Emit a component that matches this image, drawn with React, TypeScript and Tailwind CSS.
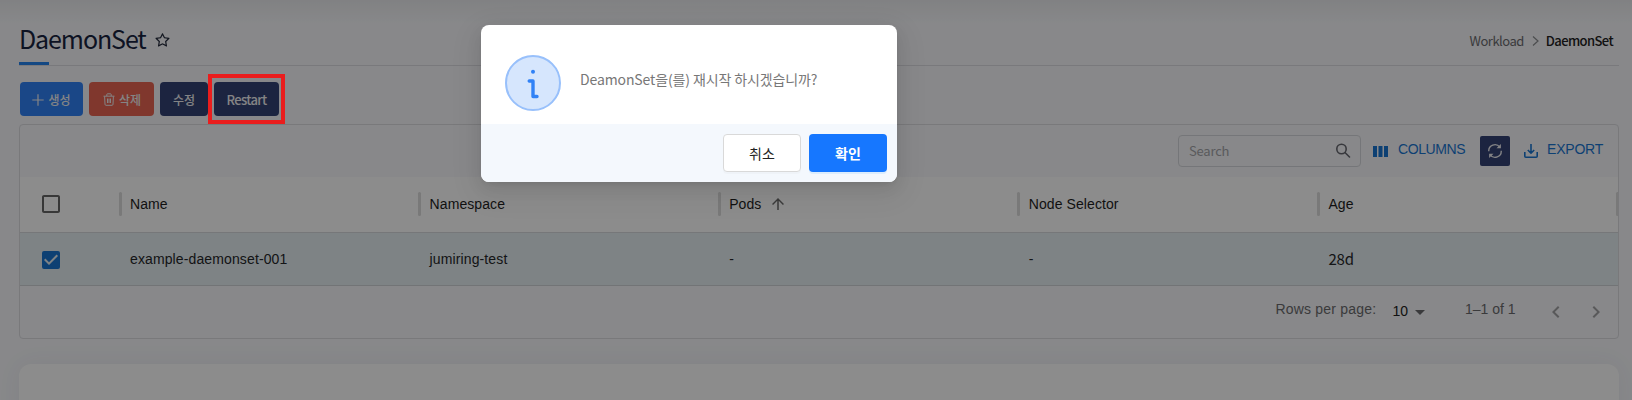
import { AiOutlineStar } from "react-icons/ai";
import { MdCheckBox, MdCheckBoxOutlineBlank, MdArrowUpward, MdArrowDropDown, MdChevronLeft, MdChevronRight } from "react-icons/md";

const columns = ["Name", "Namespace", "Pods", "Node Selector", "Age"];
const row = ["example-daemonset-001", "jumiring-test", "-", "-", "28d"];

function PlusIcon() {
  return (
    <svg width="12" height="12" viewBox="0 0 12 12" fill="none" stroke="currentColor" strokeWidth="1.2">
      <path d="M6 .3v11.400M.3 6h11.400" />
    </svg>
  );
}

function TrashIcon() {
  return (
    <svg width="12" height="13" viewBox="0 0 12 13" fill="none" stroke="currentColor" strokeWidth="1">
      <path d="M.5 3.200h11M3.800 3V1.500q0-.7.7-.7h3q.7 0 .7.7V3M1.600 3.400 2 11.300q.1 1 1 1h6q.9 0 1-1l.4-7.900M4.500 5.500v4.500M6 5.500v4.500M7.500 5.500v4.500" />
    </svg>
  );
}

function SearchIcon() {
  return (
    <svg width="16" height="16" viewBox="0 0 16 16" fill="none" stroke="#66676f" strokeWidth="1.600" strokeLinecap="round">
      <circle cx="6.500" cy="6" r="4.700" />
      <path d="m10.200 9.700 4.300 4.300" />
    </svg>
  );
}

function RefreshIcon() {
  return (
    <svg width="16" height="16" viewBox="0 0 16 16" fill="none" stroke="#eeeef2" strokeWidth="1.400">
      <path d="M1.800 8.300A6.100 6.100 0 0 1 12.800 4.200M14.200 7.700A6.100 6.100 0 0 1 3.200 11.800" />
      <path d="M13.900.9v4.400H9.500zM2.100 15.100v-4.400h4.400z" fill="#eeeef2" stroke="none" />
    </svg>
  );
}

function Header() {
  return (
    <header className="flex h-[66px] shrink-0 items-start justify-between border-b border-[#dcdde2]">
      <div className="flex h-[66px] flex-col">
        <div className="flex h-[62px] items-center gap-[8px] pt-[18px]">
          <h1 className="-mt-[4px] text-[25px] leading-[36px] tracking-[-1.1px] text-[#192440]">DaemonSet</h1>
          <AiOutlineStar className="mt-px size-[17px] text-[#22283a]" />
        </div>
        <div className="h-[3px] w-[30px] bg-[#2684ee]" />
      </div>
      <nav className="flex items-center gap-[8px] pt-[32px] pr-[6px] text-[13px] leading-[19px]">
        <span className="-mt-px tracking-[-0.500px] text-[#6b6b6f]">Workload</span>
        <svg width="7" height="12" viewBox="0 0 7 12" fill="none" stroke="#8b8c90" strokeWidth="1.200">
          <path d="M1 1.500 6 6l-5 4.500" />
        </svg>
        <span className="-mt-px -ml-px font-medium tracking-[-0.600px] text-[#222]">DaemonSet</span>
      </nav>
    </header>
  );
}

function Actions() {
  return (
    <div className="mt-4 flex h-[34px] gap-[6px] pl-px text-[12px] font-medium text-[#f0f0f2]">
      <button className="flex w-[63px] items-center justify-center gap-1 rounded bg-[#3182f6] pt-px"><PlusIcon />생성</button>
      <button className="flex w-[65px] items-center justify-center gap-1 rounded bg-[#e96552] pl-px pt-px"><TrashIcon />삭제</button>
      <button className="w-[48px] rounded bg-[#334275] pt-px">수정</button>
      <button className="w-[65px] rounded bg-[#334275] pt-px text-[13px] tracking-[-0.650px]">Restart</button>
    </div>
  );
}

function Toolbar() {
  return (
    <div className="flex h-[52px] shrink-0 items-start justify-end pr-[15px] pt-[10px] text-[14px] text-[#1976d2]">
      <div className="flex h-8 w-[183px] items-center justify-between rounded border border-[#d6d7dc] pl-[10px] pr-[9px] text-[13px] tracking-[-0.200px] text-[#a4a5a9]">
        <span>Search</span>
        <SearchIcon />
      </div>
      <div className="ml-3 flex h-8 items-center">
        <svg width="15" height="11" viewBox="0 0 15 11" fill="#1976d2"><path d="M0 0h4v11H0zM5.500 0h4v11h-4zM11 0h4v11h-4z" /></svg>
        <span className="ml-[10px] w-[82px] self-start font-['Liberation_Sans'] leading-[29px] tracking-[-0.400px]">COLUMNS</span>
      </div>
      <div className="mt-px flex size-[30px] items-center justify-center rounded-[2px] bg-[#334275]"><RefreshIcon /></div>
      <svg className="ml-[14px] mt-[9px]" width="14" height="14" viewBox="0 0 14 14" fill="none" stroke="#1976d2" strokeWidth="1.600"><path d="M7 0v9M3.800 6 7 9.200 10.200 6M.8 8v4.200q0 1 1 1h10.400q1 0 1-1V8" /></svg>
      <span className="ml-[9px] w-[56px] font-['Liberation_Sans'] leading-[29px] tracking-[-0.200px]">EXPORT</span>
    </div>
  );
}

function Table() {
  return (
    <section className="mt-2 flex h-[215px] shrink-0 flex-col overflow-hidden rounded border border-[#dcdde1] text-[14px]">
      <Toolbar />
      <div className="flex h-[56px] shrink-0 items-center border-b border-[#d8d9dc] bg-white font-['Liberation_Sans'] tracking-[0.080px] text-[#1e1e1e]">
        <div className="-mt-[2px] flex w-[98.500px] shrink-0 items-center pl-[19px]"><MdCheckBoxOutlineBlank className="size-6 text-[#666]" /></div>
        {columns.map((c) => (
          <div key={c} className="flex w-[299.600px] shrink-0 items-center">
            <span className="-mt-[2px] mr-[8.500px] h-6 w-[3px] rounded-sm bg-[#dcdcdc]" />
            {c}
            {c === "Pods" && <MdArrowUpward className="-mt-[2px] ml-[8px] size-[18px] text-[#6c6c6c]" />}
          </div>
        ))}
        <span className="-mt-[2px] h-6 w-[3px] shrink-0 rounded-sm bg-[#dcdcdc]" />
      </div>
      <div className="flex h-[53px] shrink-0 items-center border-b border-[#d0d4d8] bg-[#e6eef3] font-['Liberation_Sans'] tracking-[0.120px] text-[#252729]">
        <div className="flex w-[110px] shrink-0 items-center pl-[19px] pt-px"><MdCheckBox className="size-6 text-[#1976d2]" /></div>
        {row.map((c, i) => (
          <div key={i} className={i === 4 ? "w-[299.600px] font-['Noto_Sans_CJK_KR'] text-[15px] tracking-[-0.200px]" : "w-[299.600px] shrink-0"}>{c}</div>
        ))}
      </div>
      <div className="flex h-[51px] items-start justify-end pr-[10px] font-['Liberation_Sans'] text-[#6b6b6e]">
        <span className="w-[117px] pt-[13px] tracking-[0.200px]">Rows per page:</span>
        <span className="pt-[15px] text-[#222]">10</span>
        <MdArrowDropDown className="mt-[14px] size-6" />
        <span className="ml-[33px] w-[79px] pt-[13px]">1–1 of 1</span>
        <MdChevronLeft className="mt-[14px] size-6 text-[#a2a2a5]" />
        <MdChevronRight className="ml-4 mt-[14px] size-6 text-[#a2a2a5]" />
      </div>
    </section>
  );
}

function ConfirmDialog() {
  return (
    <div className="absolute left-[481px] top-[25px] flex h-[157px] w-[416px] flex-col overflow-hidden rounded-[8px] bg-white">
      <div className="flex h-[99px] shrink-0 pl-6 pt-[30px]">
        <svg width="56" height="56" viewBox="0 0 56 56">
          <circle cx="28" cy="28" r="27" fill="#d6e6fd" stroke="#98c0fb" strokeWidth="2" />
          <circle cx="28" cy="16.700" r="2" fill="#3182f6" />
          <path d="M24.200 26H28v15.500h4" fill="none" stroke="#3182f6" strokeWidth="3.400" strokeLinecap="round" strokeLinejoin="round" />
        </svg>
        <p className="ml-[19px] mt-[14px] text-[14px] leading-[21px] tracking-[-0.120px] text-[#777]">DeamonSet을(를) 재시작 하시겠습니까?</p>
      </div>
      <div className="flex flex-1 justify-end gap-2 bg-[#f4f8fd] pr-[10px] pt-[10px] text-[14px]">
        <button className="h-[38px] w-[78px] rounded border border-[#d9d9d9] bg-white text-[#222] shadow-[0_2px_0_rgba(0,0,0,0.02)]">취소</button>
        <button className="h-[38px] w-[78px] rounded bg-[#1677ff] font-bold text-white shadow-[0_2px_0_rgba(5,145,255,0.1)]">확인</button>
      </div>
    </div>
  );
}

export default function App() {
  return (
    <div className="relative h-[400px] w-[1632px] overflow-hidden bg-[#f7f8fb] font-['Noto_Sans_CJK_KR',sans-serif]">
      <main className="flex flex-col pl-[19px] pr-[13px]">
        <Header />
        <Actions />
        <Table />
        <div className="mt-[25px] h-[80px] rounded-[12px] bg-white shadow-[0_0_24px_rgba(60,70,100,0.06)]" />
      </main>
      <div className="absolute inset-x-0 top-0 h-6 bg-linear-to-b from-black/5 to-transparent" />
      <div className="absolute inset-0 bg-black/45" />
      <div className="absolute left-[481px] top-[25px] h-[157px] w-[416px] rounded-[8px] shadow-[0_6px_16px_rgba(0,0,0,0.08),0_3px_6px_-4px_rgba(0,0,0,0.12),0_9px_28px_8px_rgba(0,0,0,0.05)]" />
      <ConfirmDialog />
      <div className="absolute left-[208px] top-[74px] h-[50px] w-[77px] border-4 border-[#ea1d1d]" />
    </div>
  );
}
